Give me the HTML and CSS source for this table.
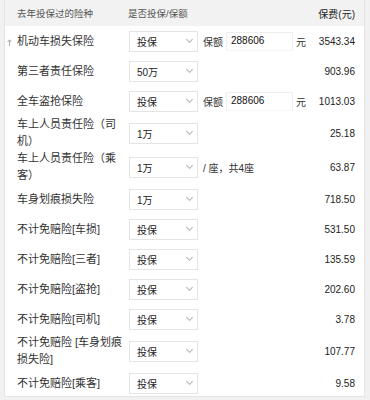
FILE: index.html
```html
<!DOCTYPE html>
<html lang="zh-CN">

<head>
  <meta charset="UTF-8">
  <meta name="viewport" content="width=device-width, initial-scale=1.0">
  <title>保险方案</title>
  <link rel="stylesheet" href="styles.css">
</head>

<body>
  <div class="plan">
    <div class="row head">
      <div class="name">去年投保过的险种</div>
      <div class="choice">是否投保/保额</div>
      <div class="fee">保费(元)</div>
    </div>

    <div class="row">
      <span class="mark">
        <svg width="5" height="7" viewBox="0 0 5 7"><path d="M2.5 7V1M0.5 3L2.5 0.8 4.5 3" fill="none" stroke="#aaa" stroke-width="1"/></svg>
      </span>
      <div class="name">机动车损失保险</div>
      <div class="pick">投保<i class="arrow"></i></div>
      <div class="extra">保额 <span class="amount">288606</span> 元</div>
      <div class="fee">3543.34</div>
    </div>
    <div class="row">
      <div class="name">第三者责任保险</div>
      <div class="pick">50万<i class="arrow"></i></div>
      <div class="extra"></div>
      <div class="fee">903.96</div>
    </div>
    <div class="row">
      <div class="name">全车盗抢保险</div>
      <div class="pick">投保<i class="arrow"></i></div>
      <div class="extra">保额 <span class="amount">288606</span> 元</div>
      <div class="fee">1013.03</div>
    </div>
    <div class="row">
      <div class="name">车上人员责任险（司机）</div>
      <div class="pick">1万<i class="arrow"></i></div>
      <div class="extra"></div>
      <div class="fee">25.18</div>
    </div>
    <div class="row">
      <div class="name">车上人员责任险（乘客）</div>
      <div class="pick">1万<i class="arrow"></i></div>
      <div class="extra">/ 座，共4座</div>
      <div class="fee">63.87</div>
    </div>
    <div class="row">
      <div class="name">车身划痕损失险</div>
      <div class="pick">1万<i class="arrow"></i></div>
      <div class="extra"></div>
      <div class="fee">718.50</div>
    </div>
    <div class="row">
      <div class="name">不计免赔险[车损]</div>
      <div class="pick">投保<i class="arrow"></i></div>
      <div class="extra"></div>
      <div class="fee">531.50</div>
    </div>
    <div class="row">
      <div class="name">不计免赔险[三者]</div>
      <div class="pick">投保<i class="arrow"></i></div>
      <div class="extra"></div>
      <div class="fee">135.59</div>
    </div>
    <div class="row">
      <div class="name">不计免赔险[盗抢]</div>
      <div class="pick">投保<i class="arrow"></i></div>
      <div class="extra"></div>
      <div class="fee">202.60</div>
    </div>
    <div class="row">
      <div class="name">不计免赔险[司机]</div>
      <div class="pick">投保<i class="arrow"></i></div>
      <div class="extra"></div>
      <div class="fee">3.78</div>
    </div>
    <div class="row">
      <div class="name">不计免赔险 [车身划痕<br>损失险]</div>
      <div class="pick">投保<i class="arrow"></i></div>
      <div class="extra"></div>
      <div class="fee">107.77</div>
    </div>
    <div class="row">
      <div class="name">不计免赔险[乘客]</div>
      <div class="pick">投保<i class="arrow"></i></div>
      <div class="extra"></div>
      <div class="fee">9.58</div>
    </div>
  </div>
</body>

</html>
```

FILE: styles.css
```css
body {
  margin: 0;
  background-color: #f1f1f1;
  font-family: "Liberation Sans", "Noto Sans CJK SC", sans-serif;
  color: #333;
}

.plan {
  margin: 0 5px 0 4px;
  height: 396px;
  background-color: #fff;
  border-left: 1px solid #e3e3e3;
  border-right: 1px solid #e3e3e3;
  border-bottom: 1px solid #e3e3e3;
  overflow: hidden;
}

.row {
  position: relative;
  display: flex;
  align-items: center;
  min-height: 30px;
  padding-left: 12px;
  padding-right: 9px;
}

.head {
  min-height: 26px;
  background-color: #f2f2f2;
  font-size: 9.5px;
  color: #555;
}

.head .choice {
  flex: 1;
  margin-left: 4px;
}

.mark {
  position: absolute;
  left: 2px;
  top: 6px;
}

.name {
  width: 107px;
  font-size: 11px;
  line-height: 17px;
  color: #333;
}

.head .name {
  font-size: 9.5px;
  color: #555;
}

.pick {
  display: flex;
  align-items: center;
  justify-content: space-between;
  box-sizing: border-box;
  width: 69px;
  height: 21px;
  margin-left: 5px;
  padding: 0 5px 0 7px;
  border: 1px solid #e4e4e4;
  font-size: 10px;
  color: #222;
}

.arrow {
  width: 4px;
  height: 4px;
  margin-top: -3px;
  border-right: 1px solid #b5b5b5;
  border-bottom: 1px solid #b5b5b5;
  transform: rotate(45deg);
}

.extra {
  flex: 1;
  display: flex;
  align-items: center;
  padding-left: 5px;
  font-size: 10px;
  color: #333;
}

.amount {
  box-sizing: border-box;
  width: 67px;
  height: 19px;
  margin: 0 3px 0 3px;
  padding: 2px 4px 0;
  border: 1px solid #eee;
  border-bottom-color: #f6f6f6;
  font-size: 10px;
  color: #111;
}

.fee {
  font-size: 10px;
  text-align: right;
  color: #222;
}
```
